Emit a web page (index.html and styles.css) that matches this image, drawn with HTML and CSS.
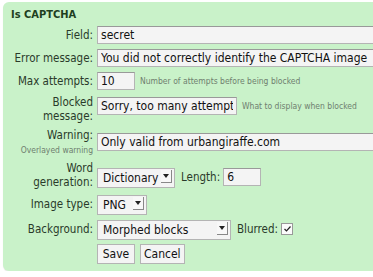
FILE: index.html
```html
<!DOCTYPE html>
<html lang="en">
<head>
    <meta charset="UTF-8">
    <title>Is CAPTCHA</title>
    <link rel="stylesheet" href="styles.css">
</head>
<body>
    <div class="panel">
        <h2 class="panel-title">Is CAPTCHA</h2>

        <form class="field-form">
            <label class="field-label" for="field">Field:</label>
            <div class="field-control">
                <input type="text" id="field" class="text-input wide" value="secret">
            </div>

            <label class="field-label" for="errorMessage">Error message:</label>
            <div class="field-control">
                <input type="text" id="errorMessage" class="text-input wide" value="You did not correctly identify the CAPTCHA image">
            </div>

            <label class="field-label" for="maxAttempts">Max attempts:</label>
            <div class="field-control">
                <input type="text" id="maxAttempts" class="text-input short" value="10">
                <span class="hint">Number of attempts before being blocked</span>
            </div>

            <label class="field-label tight" for="blockedMessage">Blocked<br>message:</label>
            <div class="field-control top">
                <input type="text" id="blockedMessage" class="text-input medium" value="Sorry, too many attempts">
                <span class="hint">What to display when blocked</span>
            </div>

            <label class="field-label tight" for="warning">Warning:<br><span class="label-note">Overlayed warning</span></label>
            <div class="field-control">
                <input type="text" id="warning" class="text-input wide" value="Only valid from urbangiraffe.com">
            </div>

            <label class="field-label tight" for="wordGeneration">Word<br>generation:</label>
            <div class="field-control bottom">
                <span class="select-box">
                    <select id="wordGeneration" class="select-input dictionary">
                        <option>Dictionary</option>
                        <option>Random</option>
                    </select>
                    <span class="select-arrow"></span>
                </span>
                <label class="inline-label" for="length">Length:</label>
                <input type="text" id="length" class="text-input short" value="6">
            </div>

            <label class="field-label" for="imageType">Image type:</label>
            <div class="field-control">
                <span class="select-box">
                    <select id="imageType" class="select-input png">
                        <option>PNG</option>
                        <option>JPEG</option>
                        <option>GIF</option>
                    </select>
                    <span class="select-arrow"></span>
                </span>
            </div>

            <label class="field-label" for="background">Background:</label>
            <div class="field-control">
                <span class="select-box">
                    <select id="background" class="select-input morphed">
                        <option>Morphed blocks</option>
                        <option>Solid</option>
                    </select>
                    <span class="select-arrow"></span>
                </span>
                <label class="inline-label" for="blurred">Blurred:</label>
                <span class="check-box" id="blurred">
                    <svg width="7" height="6" viewBox="0 0 7 6"><path d="M0.5 3 L2.5 5 L6.5 0.5" fill="none" stroke="#222" stroke-width="1.2"/></svg>
                </span>
            </div>

            <span></span>
            <div class="field-control">
                <button type="submit" class="form-button">Save</button>
                <button type="button" class="form-button">Cancel</button>
            </div>
        </form>
    </div>
</body>
</html>
```

FILE: styles.css
```css
* {
    margin: 0;
    padding: 0;
    box-sizing: border-box;
}

body {
    font-family: 'DejaVu Sans Condensed', 'DejaVu Sans', sans-serif;
    font-stretch: condensed;
    background: white;
    overflow: hidden;
    color: #2a3a2a;
}

.panel {
    margin: 2px 0 0 3px;
    width: 430px;
    height: 269px;
    background: #c9f2c9;
    border-radius: 6px 0 0 6px;
    padding: 5px 0 0 8px;
    box-shadow: 0 1px 1px rgba(0, 0, 0, 0.08);
}

.panel-title {
    font-size: 11px;
    font-weight: bold;
    color: #1f3f1f;
    line-height: 16px;
    margin-bottom: 3px;
}

.field-form {
    display: grid;
    grid-template-columns: 82px auto;
    column-gap: 4px;
    row-gap: 5px;
    align-items: center;
}

.field-label {
    text-align: right;
    font-size: 11.5px;
    line-height: 15px;
    color: #2a3a2a;
}

.field-label.tight {
    line-height: 14px;
}

.label-note {
    font-size: 8.5px;
    color: #6f806f;
    line-height: 12px;
}

.field-control {
    display: flex;
    align-items: center;
    gap: 5px;
}

.field-control.top {
    align-self: start;
    margin-top: 2px;
}

.field-control.bottom {
    align-self: end;
    margin-bottom: 2px;
}

.text-input {
    height: 18px;
    font-family: inherit;
    font-stretch: condensed;
    font-size: 12px;
    color: #111;
    background: #f4f4f4;
    border: 1px solid #b4b4b4;
    border-top-color: #999;
    padding: 0 3px;
    outline: none;
}

.text-input.wide {
    width: 300px;
}

.text-input.medium {
    width: 140px;
}

.text-input.short {
    width: 38px;
}

.hint {
    font-size: 8.5px;
    color: #6f806f;
    white-space: nowrap;
}

.inline-label {
    font-size: 11.5px;
    color: #2a3a2a;
    margin-left: 1px;
    margin-right: -2px;
}

.select-box {
    position: relative;
    display: inline-block;
    height: 20px;
}

.select-input {
    appearance: none;
    -webkit-appearance: none;
    height: 20px;
    font-family: inherit;
    font-stretch: condensed;
    font-size: 12px;
    color: #111;
    background: #f4f4f4;
    border: 1px solid #b4b4b4;
    border-radius: 0;
    padding: 0 0 0 5px;
    outline: none;
}

.select-input.dictionary {
    width: 78px;
}

.select-input.png {
    width: 50px;
}

.select-input.morphed {
    width: 134px;
}

.select-arrow {
    position: absolute;
    top: 3px;
    right: 3px;
    width: 11px;
    height: 13px;
    background: #f8f8f8;
    border-right: 1px solid #888;
    border-bottom: 1px solid #888;
    pointer-events: none;
}

.select-arrow::after {
    content: '';
    position: absolute;
    left: 2px;
    top: 4px;
    border-left: 3px solid transparent;
    border-right: 3px solid transparent;
    border-top: 4px solid #222;
}

.check-box {
    display: inline-flex;
    align-items: center;
    justify-content: center;
    width: 12px;
    height: 12px;
    background: #fbfbfb;
    border: 1px solid #999;
}

.form-button {
    height: 20px;
    min-width: 38px;
    font-family: inherit;
    font-stretch: condensed;
    font-size: 12px;
    color: #111;
    background: #f4f4f4;
    border: 1px solid #b4b4b4;
    padding: 0 3px;
}
```
